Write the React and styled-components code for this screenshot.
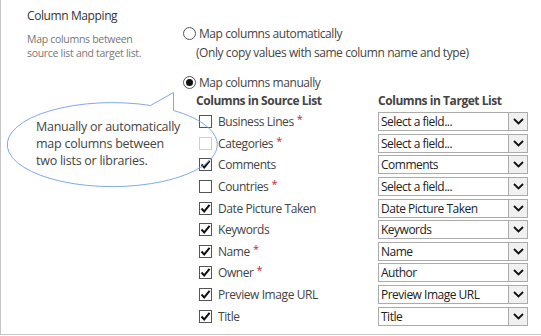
import React from "react";
import styled, { createGlobalStyle } from "styled-components";

const Global = createGlobalStyle`
  html, body { margin: 0; padding: 0; background: #fff; }
  body { font-family: "Open Sans", "Noto Sans", sans-serif; }
`;

const Frame = styled.div`
  position: relative;
  box-sizing: border-box;
  width: 541px;
  height: 335px;
  border-left: 1px solid #c6c6c6;
  border-bottom: 1px solid #c6c6c6;
  display: flex;
  overflow: hidden;
`;

const LeftCol = styled.div`
  width: 156px;
  padding: 7px 0 0 26px;
  flex: none;
`;

const Title = styled.div`
  font-size: 12px;
  color: #333;
  line-height: 18px;
  letter-spacing: -0.4px;
`;

const Desc = styled.div`
  margin-top: 7px;
  font-size: 10.5px;
  color: #777;
  line-height: 14px;
  letter-spacing: -0.3px;
`;

const RightCol = styled.div`
  padding: 24px 0 0 0;
  flex: 1;
`;

const RadioRow = styled.div`
  display: flex;
  align-items: center;
  gap: 3px;
  height: 18px;
  margin-top: ${(p) => p.$mt || 0}px;
`;

const RadioCircle = styled.span`
  box-sizing: border-box;
  width: 13px;
  height: 13px;
  border-radius: 50%;
  border: 1px solid #555;
  display: flex;
  align-items: center;
  justify-content: center;
  background: #fff;
  &::after {
    content: "";
    display: ${(p) => (p.$checked ? "block" : "none")};
    width: 7px;
    height: 7px;
    border-radius: 50%;
    background: #111;
  }
`;

const Label = styled.span`
  font-size: 12px;
  color: #444;
  letter-spacing: -0.42px;
  white-space: nowrap;
`;

const Note = styled.div`
  font-size: 12px;
  color: #444;
  letter-spacing: -0.42px;
  padding-left: 13px;
  line-height: 18px;
  margin-top: 2px;
`;

const Columns = styled.div`
  padding-left: 13px;
`;

const HeadRow = styled.div`
  display: grid;
  grid-template-columns: 182px 150px;
  margin-top: 2px;
  height: 16px;
  margin-bottom: 2px;
`;

const Head = styled.div`
  font-size: 12px;
  font-weight: 700;
  color: #444;
  letter-spacing: -0.45px;
  line-height: 16px;
  white-space: nowrap;
`;

const Grid = styled.div`
  display: grid;
  grid-template-columns: 182px 150px;
  grid-auto-rows: 21.6px;
`;

const Source = styled.div`
  display: flex;
  align-items: center;
  padding-left: 3px;
  gap: 6px;
`;

const Box = styled.span`
  box-sizing: border-box;
  width: 13px;
  height: 13px;
  flex: none;
  border: 1px solid ${(p) => (p.$disabled ? "#cfcfcf" : "#555")};
  background: #fff;
  display: flex;
  align-items: center;
  justify-content: center;
`;

const Req = styled.span`
  color: #c4262e;
  font-size: 11px;
  position: relative;
  top: -3px;
  margin-left: 3px;
`;

const Select = styled.div`
  box-sizing: border-box;
  width: 150px;
  height: 19px;
  border: 1px solid #ababab;
  display: flex;
  align-self: center;
  background: #fff;
`;

const SelectText = styled.span`
  flex: 1;
  font-size: 12px;
  color: #222;
  padding-left: 2px;
  line-height: 17px;
  letter-spacing: -0.5px;
  white-space: nowrap;
  overflow: hidden;
`;

const Arrow = styled.span`
  box-sizing: border-box;
  width: 19px;
  border-left: 1px solid #ababab;
  background: #f0f0f0;
  display: flex;
  align-items: center;
  justify-content: center;
`;

const Bubble = styled.div`
  position: absolute;
  left: 4px;
  top: 91px;
  width: 216px;
  height: 98px;
`;

const BubbleText = styled.div`
  position: absolute;
  left: 31px;
  top: 27px;
  font-size: 12.5px;
  line-height: 17px;
  color: #444;
  letter-spacing: -0.25px;
`;

const Check = () => (
  <svg width="11" height="11" viewBox="0 0 11 11">
    <path d="M1.5 5.5 L4.2 8.4 L9.6 1.8" fill="none" stroke="#111" strokeWidth="2" />
  </svg>
);

const Chevron = () => (
  <svg width="11" height="7" viewBox="0 0 11 7">
    <path d="M1 1 L5.5 5.5 L10 1" fill="none" stroke="#111" strokeWidth="1.8" />
  </svg>
);

const rows = [
  { name: "Business Lines", req: true, checked: false, target: "Select a field..." },
  { name: "Categories", req: true, checked: false, disabled: true, target: "Select a field..." },
  { name: "Comments", checked: true, target: "Comments" },
  { name: "Countries", req: true, checked: false, target: "Select a field..." },
  { name: "Date Picture Taken", checked: true, target: "Date Picture Taken" },
  { name: "Keywords", checked: true, target: "Keywords" },
  { name: "Name", req: true, checked: true, target: "Name" },
  { name: "Owner", req: true, checked: true, target: "Author" },
  { name: "Preview Image URL", checked: true, target: "Preview Image URL" },
  { name: "Title", checked: true, target: "Title" },
];

export default function App() {
  return (
    <>
      <Global />
      <Frame>
        <LeftCol>
          <Title>Column Mapping</Title>
          <Desc>
            Map columns between
            <br />
            source list and target list.
          </Desc>
        </LeftCol>
        <RightCol>
          <RadioRow>
            <RadioCircle />
            <Label>Map columns automatically</Label>
          </RadioRow>
          <Note>(Only copy values with same column name and type)</Note>
          <RadioRow $mt={11}>
            <RadioCircle $checked />
            <Label>Map columns manually</Label>
          </RadioRow>
          <Columns>
            <HeadRow>
              <Head>Columns in Source List</Head>
              <Head>Columns in Target List</Head>
            </HeadRow>
            <Grid>
              {rows.map((r) => (
                <React.Fragment key={r.name}>
                  <Source>
                    <Box $disabled={r.disabled}>{r.checked && <Check />}</Box>
                    <Label>
                      {r.name}
                      {r.req && <Req>*</Req>}
                    </Label>
                  </Source>
                  <Select>
                    <SelectText>{r.target}</SelectText>
                    <Arrow>
                      <Chevron />
                    </Arrow>
                  </Select>
                </React.Fragment>
              ))}
            </Grid>
          </Columns>
        </RightCol>
        <Bubble>
          <svg width="216" height="98" viewBox="0 0 216 98">
            <path
              d="M145.5 14.5 L168.5 1.5 L168.5 19.5 A105 42 0 1 1 145.5 14.5 Z"
              fill="none"
              stroke="#7fa9e8"
              strokeWidth="1"
            />
          </svg>
          <BubbleText>
            Manually or automatically
            <br />
            map columns between
            <br />
            two lists or libraries.
          </BubbleText>
        </Bubble>
      </Frame>
    </>
  );
}
